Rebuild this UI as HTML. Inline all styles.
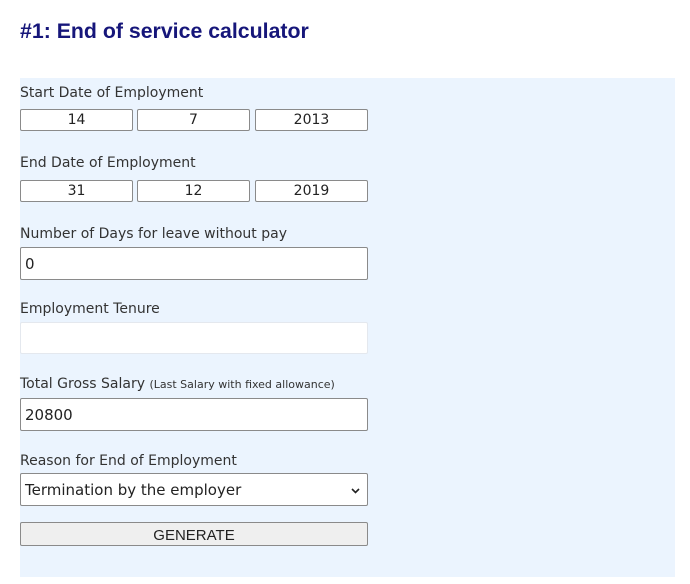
<!DOCTYPE html>
<html><head><style>
body{margin:0;width:690px;height:584px;background:#fff;position:relative;font-family:"DejaVu Sans",Verdana,sans-serif;overflow:hidden}
h1{position:absolute;left:20px;top:19px;margin:0;font:bold 21.3px "Liberation Sans",Arial,sans-serif;color:#16167a}
.panel{position:absolute;left:20px;top:78px;width:655px;height:499px;background:#ebf4fe}
.lbl{position:absolute;left:20px;font-size:14px;color:#333;line-height:16px}
.lbl small{font-size:11px}
.box{position:absolute;box-sizing:border-box;background:#fff;border:1px solid #8a8a8a;border-radius:2px;font-size:14px;color:#222}
.d{height:22px;width:113px;text-align:center;line-height:21px}
.f{left:20px;width:348px;height:33px;line-height:33px;padding-left:4px;font-size:15px}
</style></head><body>
<h1>#1: End of service calculator</h1>
<div class="panel"></div>
<div class="lbl" style="top:85px">Start Date of Employment</div>
<div class="box d" style="left:20px;top:109px">14</div>
<div class="box d" style="left:137px;top:109px">7</div>
<div class="box d" style="left:255px;top:109px">2013</div>
<div class="lbl" style="top:155px">End Date of Employment</div>
<div class="box d" style="left:20px;top:180px">31</div>
<div class="box d" style="left:137px;top:180px">12</div>
<div class="box d" style="left:255px;top:180px">2019</div>
<div class="lbl" style="top:226px">Number of Days for leave without pay</div>
<div class="box f" style="top:247px">0</div>
<div class="lbl" style="top:301px">Employment Tenure</div>
<div class="box f" style="top:322px;border-color:#e4e8ee;height:32px"></div>
<div class="lbl" style="top:376px">Total Gross Salary <small>(Last Salary with fixed allowance)</small></div>
<div class="box f" style="top:398px">20800</div>
<div class="lbl" style="top:453px">Reason for End of Employment</div>
<div class="box f" style="top:473px">Termination by the employer
<svg style="position:absolute;right:7px;top:14px" width="9" height="6" viewBox="0 0 9 6"><path d="M1 1l3.5 3.5L8 1" stroke="#222" stroke-width="1.6" fill="none"/></svg></div>
<div class="box" style="left:20px;top:522px;width:348px;height:24px;background:#efefef;color:#222"><span style="position:absolute;left:0;right:0;top:4px;text-align:center;line-height:16px;font:15px 'Liberation Sans',Arial,sans-serif">GENERATE</span></div>
</body></html>
